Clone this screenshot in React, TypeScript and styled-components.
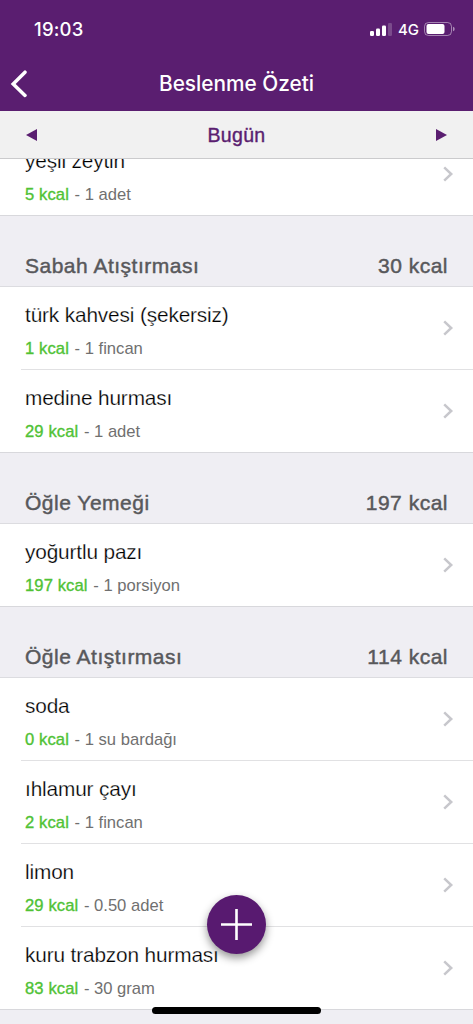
import React from "react";
import styled, { createGlobalStyle } from "styled-components";

const GlobalStyle = createGlobalStyle`
  * { box-sizing: border-box; }
  body { margin: 0; background: #efeff4; overflow: hidden; }
`;

const PURPLE = "#5a1e70";

const Screen = styled.main`
  position: relative;
  display: flex;
  flex-direction: column;
  width: 473px;
  height: 1024px;
  overflow: hidden;
  background: #efeef3;
  font-family: "Liberation Sans", Arial, sans-serif;
`;

const TopArea = styled.header`
  flex: none;
  height: 111px;
  background: ${PURPLE};
  color: #fff;
  font-family: Inter, sans-serif;
`;

const StatusBar = styled.div`
  display: flex;
  align-items: center;
  justify-content: space-between;
  height: 58px;
  padding: 0 18px 0 34px;
`;

const Clock = styled.span`
  font-size: 18.5px;
  font-weight: 550;
  letter-spacing: 0.2px;
`;

const StatusIcons = styled.div`
  display: flex;
  align-items: center;
`;

const Network = styled.span`
  margin: 1px 5px 0 6px;
  font-size: 15px;
  font-weight: 450;
`;

const NavBar = styled.nav`
  display: grid;
  grid-template-columns: 50px 1fr 50px;
  align-items: center;
  height: 51px;
`;

const BackButton = styled.button`
  display: flex;
  padding: 0 0 0 10px;
  border: 0;
  background: none;
`;

const NavTitle = styled.h1`
  margin: 0;
  text-align: center;
  font-size: 20.8px;
  font-weight: 540;
  line-height: 26px;
`;

const DateBar = styled.div`
  flex: none;
  display: flex;
  align-items: center;
  justify-content: space-between;
  height: 48px;
  padding: 0 26px;
  background: #f1f1f1;
  border-bottom: 1px solid #cbcbcd;
`;

const DayButton = styled.button`
  display: flex;
  padding: 0;
  border: 0;
  background: none;
`;

const Day = styled.span`
  padding-top: 2px;
  color: ${PURPLE};
  font-size: 19.5px;
  letter-spacing: 0.3px;
  -webkit-text-stroke: 0.4px ${PURPLE};
`;

const ListViewport = styled.div`
  flex: 1;
  min-height: 0;
  overflow: hidden;
`;

const List = styled.div`
  margin-top: -26px;
`;

const SectionHeader = styled.h2`
  display: flex;
  justify-content: space-between;
  height: 71px;
  margin: 0;
  padding: 38px 25px 0;
  border-bottom: 1px solid #dcdce0;
  color: #58585b;
  font-size: 21px;
  font-weight: 400;
  line-height: 24px;
  letter-spacing: 0.5px;
  -webkit-text-stroke: 0.45px #58585b;
`;

const Row = styled.div<{ $last: boolean }>`
  display: flex;
  height: 83px;
  background: #fff;
  padding-left: ${(p) => (p.$last ? 0 : 21)}px;
`;

const RowBody = styled.div<{ $last: boolean }>`
  flex: 1;
  display: flex;
  align-items: center;
  justify-content: space-between;
  padding: 0 19px 0 ${(p) => (p.$last ? 25 : 4)}px;
  border-bottom: 1px solid ${(p) => (p.$last ? "#d8d8dc" : "#e1e1e3")};
`;

const FoodText = styled.div`
  align-self: flex-start;
  padding-top: 16px;
  white-space: nowrap;
`;

const FoodName = styled.div`
  color: #000;
  font-size: 20.8px;
  line-height: 24px;
  letter-spacing: -0.14px;
  -webkit-text-stroke: 0.25px #fff;
`;

const Detail = styled.div`
  margin-top: 11px;
  color: #707070;
  font-size: 16.6px;
  line-height: 21px;
`;

const Calories = styled.span`
  margin-right: 1px;
  color: #4fc235;
  letter-spacing: 0.1px;
  -webkit-text-stroke: 0.35px #4fc235;
`;

const AddButton = styled.button`
  position: absolute;
  left: 207px;
  top: 895px;
  display: flex;
  align-items: center;
  justify-content: center;
  width: 59px;
  height: 59px;
  padding: 0;
  border: 0;
  border-radius: 50%;
  background: #581a70;
  box-shadow: 0 4px 8px rgba(0, 0, 0, 0.42);
`;

const HomeIndicator = styled.div`
  position: absolute;
  left: 152px;
  top: 1007px;
  width: 169px;
  height: 7px;
  border-radius: 4px;
  background: #000;
`;

interface Food {
  name: string;
  kcal: number;
  amount: string;
}

interface Meal {
  title?: string;
  total?: number;
  foods: Food[];
}

const meals: Meal[] = [
  { foods: [{ name: "yeşil zeytin", kcal: 5, amount: "1 adet" }] },
  {
    title: "Sabah Atıştırması",
    total: 30,
    foods: [
      { name: "türk kahvesi (şekersiz)", kcal: 1, amount: "1 fincan" },
      { name: "medine hurması", kcal: 29, amount: "1 adet" },
    ],
  },
  {
    title: "Öğle Yemeği",
    total: 197,
    foods: [{ name: "yoğurtlu pazı", kcal: 197, amount: "1 porsiyon" }],
  },
  {
    title: "Öğle Atıştırması",
    total: 114,
    foods: [
      { name: "soda", kcal: 0, amount: "1 su bardağı" },
      { name: "ıhlamur çayı", kcal: 2, amount: "1 fincan" },
      { name: "limon", kcal: 29, amount: "0.50 adet" },
      { name: "kuru trabzon hurması", kcal: 83, amount: "30 gram" },
    ],
  },
];

const SignalIcon = () => (
  <svg width="22" height="13" viewBox="0 0 22 13" fill="#fff">
    <rect x="0" y="8" width="4" height="5" rx="1.2" />
    <rect x="6" y="5.5" width="4" height="7.5" rx="1.2" />
    <rect x="12" y="2.5" width="4" height="10.5" rx="1.2" />
    <rect x="18" y="0" width="4" height="13" rx="1.2" opacity="0.2" />
  </svg>
);

const BatteryIcon = () => (
  <svg width="31" height="14" viewBox="0 0 31 14">
    <rect x="0.5" y="0.5" width="27" height="13" rx="4" fill="none" stroke="#fff" strokeOpacity="0.45" />
    <rect x="2.5" y="2" width="18" height="10" rx="2" fill="#fff" />
    <path d="M29 4.7Q30.7 5.2 30.7 7T29 9.3Z" fill="#fff" fillOpacity="0.5" />
  </svg>
);

const BackIcon = () => (
  <svg width="18" height="28" viewBox="0 0 18 28" fill="none">
    <path d="M15 2.2L3.2 14L15 25.4" stroke="#fff" strokeWidth="3.5" strokeLinecap="round" />
  </svg>
);

const Chevron = () => (
  <svg width="12" height="16" viewBox="0 0 12 16" fill="none">
    <path d="M2.2 1.4L9.2 8L2.2 14.6" stroke="#c7c7cc" strokeWidth="2.5" />
  </svg>
);

const Triangle = ({ next = false }: { next?: boolean }) => (
  <svg width="11" height="12" viewBox="0 0 11 12" fill={PURPLE}>
    <path d={next ? "M0 0L11 6L0 12Z" : "M11 0L0 6L11 12Z"} />
  </svg>
);

const PlusIcon = () => (
  <svg width="31" height="31" viewBox="0 0 31 31">
    <path d="M15.5 0V31M0 15.5H31" stroke="#fff" strokeWidth="2.6" />
  </svg>
);

export default function App() {
  return (
    <>
      <GlobalStyle />
      <Screen>
        <TopArea>
          <StatusBar>
            <Clock>19:03</Clock>
            <StatusIcons>
              <SignalIcon />
              <Network>4G</Network>
              <BatteryIcon />
            </StatusIcons>
          </StatusBar>
          <NavBar>
            <BackButton aria-label="Geri">
              <BackIcon />
            </BackButton>
            <NavTitle>Beslenme Özeti</NavTitle>
          </NavBar>
        </TopArea>
        <DateBar>
          <DayButton aria-label="Önceki gün">
            <Triangle />
          </DayButton>
          <Day>Bugün</Day>
          <DayButton aria-label="Sonraki gün">
            <Triangle next />
          </DayButton>
        </DateBar>
        <ListViewport>
          <List>
            {meals.map((meal, m) => (
              <section key={m}>
                {meal.title && (
                  <SectionHeader>
                    <span>{meal.title}</span>
                    <span>{meal.total} kcal</span>
                  </SectionHeader>
                )}
                {meal.foods.map((food, i) => {
                  const last = i === meal.foods.length - 1;
                  return (
                    <Row key={food.name} $last={last}>
                      <RowBody $last={last}>
                        <FoodText>
                          <FoodName>{food.name}</FoodName>
                          <Detail>
                            <Calories>{food.kcal} kcal</Calories> - {food.amount}
                          </Detail>
                        </FoodText>
                        <Chevron />
                      </RowBody>
                    </Row>
                  );
                })}
              </section>
            ))}
          </List>
        </ListViewport>
        <AddButton aria-label="Ekle">
          <PlusIcon />
        </AddButton>
        <HomeIndicator />
      </Screen>
    </>
  );
}
